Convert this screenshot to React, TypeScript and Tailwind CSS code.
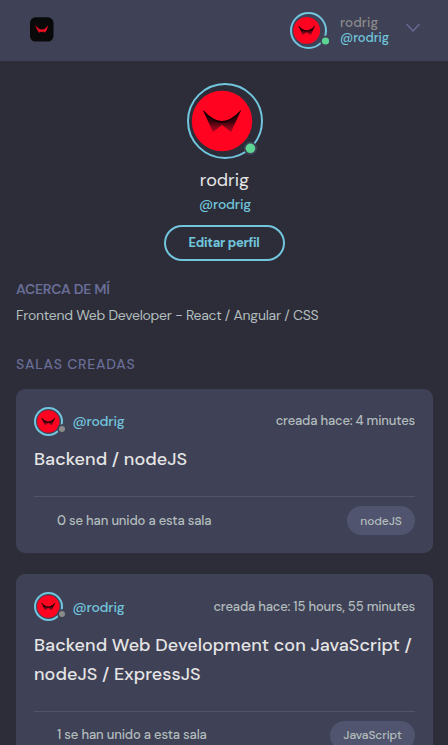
type AvatarProps = {
  id: string;
  size: number;
  cx: number;
  cy: number;
  r: number;
  dot: [number, number, number];
  dotColor: string;
  surface: string;
};

function Avatar({ id, size, cx, cy, r, dot, dotColor, surface }: AvatarProps) {
  const k = r / 30;
  return (
    <svg width={size} height={size} viewBox={`0 0 ${size} ${size}`} className="block shrink-0 overflow-visible">
      <defs>
        <linearGradient id={id} x1="0" y1="-8" x2="0" y2="11" gradientUnits="userSpaceOnUse">
          <stop offset="0" stopColor="#100003" />
          <stop offset="0.45" stopColor="#3d030c" />
          <stop offset="0.75" stopColor="#85071a" />
          <stop offset="1" stopColor="#a80a20" />
        </linearGradient>
      </defs>
      <circle cx={size / 2} cy={size / 2} r={size / 2 - 1} fill="none" stroke="#71c6dd" strokeWidth="2" />
      <circle cx={cx} cy={cy} r={r} fill="#ff0320" />
      <g transform={`translate(${cx} ${cy}) scale(${k})`}>
        <path d="M-19 -11Q-9 0 0 0Q9 0 19 -11L9 11L0 4L-9 11Z" fill={`url(#${id})`} />
        <path d="M-19 -11Q-8 .5 0 .5Q8 .5 19 -11L17 -7.5Q7 2 0 2Q-7 2 -17 -7.5Z" fill="#160004" />
      </g>
      <circle cx={dot[0]} cy={dot[1]} r={dot[2] + 1.8} fill={surface} />
      <circle cx={dot[0]} cy={dot[1]} r={dot[2]} fill={dotColor} />
    </svg>
  );
}

function Logo() {
  return (
    <svg width="24" height="25" viewBox="0 0 24 25" className="block">
      <rect y="0.3" width="23.5" height="24.3" rx="5.5" fill="#090909" />
      <path d="M5.2 8.3Q9 12.5 12 12.5Q15 12.5 18.2 8.3L16.8 13.2L14.8 15.8L13.6 14.8L11.8 15.2L10.8 14.8L9.2 15.8L7.2 13Z" fill="#df1022" />
    </svg>
  );
}

type Room = { ago: string; title: string[]; joined: string; tag: string; tagClass: string };

function RoomCard({ room, index }: { room: Room; index: number }) {
  return (
    <article className="rounded-[9px] bg-[#3f4156] px-[18px] pt-[18px] pb-[17.7px]">
      <div className="flex h-[29px] items-start">
        <Avatar id={`room${index}`} size={29} cx={14.3} cy={14.5} r={11.2} dot={[28, 22, 3]} dotColor="#8b8b8b" surface="#3f4156" />
        <span className="mt-[4.3px] ml-[9.5px] text-[14px] leading-5 font-medium tracking-[-0.22px] text-[#71c6dd]">@rodrig</span>
        <span className="mt-[4.3px] ml-auto text-[13px] leading-5 font-medium whitespace-nowrap tracking-[-0.17px] text-[#b2bdbd]">{room.ago}</span>
      </div>
      <h3 className="mt-[9.2px] text-[18px] leading-[29.1px] font-medium tracking-[0.05px] text-[#e5e5e5]">
        {room.title.map((line) => (
          <span key={line} className="block whitespace-nowrap">{line}</span>
        ))}
      </h3>
      <div className="mt-[22px] flex items-center justify-between border-t border-[#51546e] pt-[9px]">
        <span className="ml-[23px] text-[13px] leading-5 font-medium tracking-[-0.14px] text-[#b2bdbd]">{room.joined}</span>
        <span className={`flex h-[29px] items-center justify-center rounded-full bg-[#51546e] text-[12px] font-medium tracking-[-0.1px] text-[#b2bdbd] ${room.tagClass}`}>{room.tag}</span>
      </div>
    </article>
  );
}

const rooms: Room[] = [
  {
    ago: "creada hace: 4 minutes",
    title: ["Backend / nodeJS"],
    joined: "0 se han unido a esta sala",
    tag: "nodeJS",
    tagClass: "w-[68px]",
  },
  {
    ago: "creada hace: 15 hours, 55 minutes",
    title: ["Backend Web Development con JavaScript /", "nodeJS / ExpressJS"],
    joined: "1 se han unido a esta sala",
    tag: "JavaScript",
    tagClass: "w-[85px]",
  },
];

export default function App() {
  return (
    <div className="h-[745px] overflow-hidden bg-[#2d2d39] font-['DM_Sans','Inter',sans-serif]">
      <header className="flex h-[61px] items-start bg-[#3f4156] pl-[30px]">
        <div className="pt-[16.5px]"><Logo /></div>
        <div className="ml-auto flex w-[158px] pt-[12px]">
          <Avatar id="nav" size={37} cx={16.7} cy={18.4} r={13.4} dot={[35.5, 29, 3.6]} dotColor="#5dd693" surface="#3f4156" />
          <div className="ml-[13px] w-[60px] pt-[3px] text-[13px] leading-[15px]">
            <p className="text-[13.5px] leading-[15px] font-medium tracking-[0.05px] text-[#8b8b8b]">rodrig</p>
            <p className="font-medium tracking-[-0.1px] text-[#71c6dd]">@rodrig</p>
          </div>
          <svg width="16" height="10" viewBox="0 0 16 10" className="mt-[11px] ml-[5px]" fill="none" stroke="#696d97" strokeWidth="1.2">
            <path d="M1.5 1L8 8L14.5 1" />
          </svg>
        </div>
      </header>
      <main className="px-[16px] pt-[22px]">
        <section className="flex flex-col items-center">
          <div className="pl-[2px]">
            <Avatar id="profile" size={76} cx={35} cy={38} r={30.2} dot={[63.4, 65.3, 4.8]} dotColor="#5dd693" surface="#3f4156" />
          </div>
          <h1 className="mt-[8px] pl-px text-[18px] leading-[26px] text-[#e5e5e5]">rodrig</h1>
          <p className="mt-[1px] pl-[2px] text-[14px] leading-[20px] font-medium tracking-[-0.22px] text-[#71c6dd]">@rodrig</p>
          <button className="mt-[11px] h-[36px] w-[121px] rounded-full border-2 border-[#71c6dd] text-[13px] font-bold tracking-[-0.3px] text-[#71c6dd]">Editar perfil</button>
        </section>
        <section className="mt-[18px]">
          <h2 className="text-[14px] leading-5 font-semibold tracking-[-0.25px] text-[#696d97]">ACERCA DE MÍ</h2>
          <p className="mt-[6px] text-[14px] leading-5 whitespace-nowrap tracking-[-0.26px] text-[#b2bdbd]">Frontend Web Developer - React / Angular / CSS</p>
        </section>
        <section className="mt-[29px]">
          <h2 className="text-[14px] leading-5 font-medium tracking-[0.77px] text-[#696d97]">SALAS CREADAS</h2>
          <div className="mt-[15px] mr-[-1px] flex flex-col gap-[21.4px]">
            {rooms.map((room, i) => <RoomCard key={room.tag} room={room} index={i} />)}
          </div>
        </section>
      </main>
    </div>
  );
}
